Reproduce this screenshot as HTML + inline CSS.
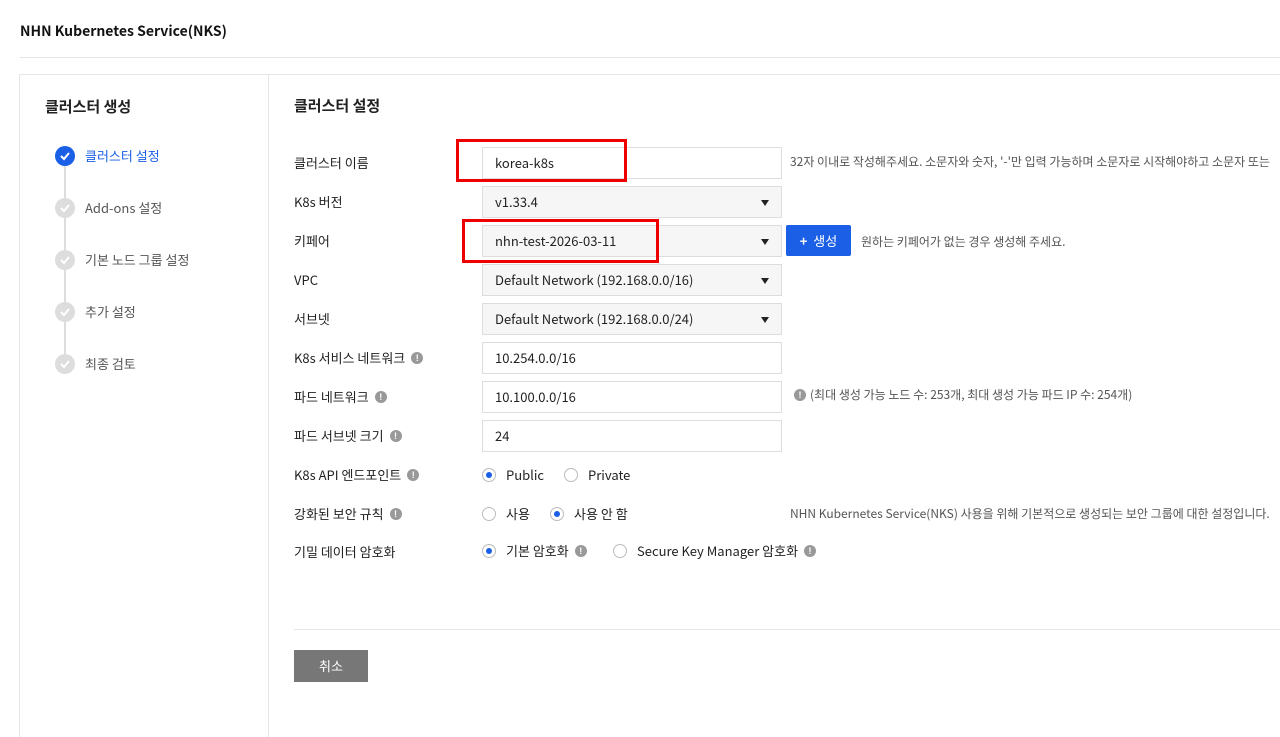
<!DOCTYPE html>
<html><head><meta charset="utf-8"><style>
*{box-sizing:border-box;margin:0;padding:0}
html,body{width:1280px;height:737px;overflow:hidden}
body{background:#fff;font-family:"Noto Sans CJK KR","Liberation Sans",sans-serif;color:#222;position:relative;font-size:13px}
.a{position:absolute;white-space:nowrap}
.lbl{position:absolute;left:294px;font-size:13px;color:#222;height:32px;line-height:32px;white-space:nowrap}
.inp{position:absolute;left:482px;width:300px;height:32px;border:1px solid #ddd;background:#fff;padding-left:12px;line-height:30px;font-size:13px}
.sel{background:#f6f6f6}
.sel:after{content:"";position:absolute;right:12px;top:13px;border-left:4px solid transparent;border-right:4px solid transparent;border-top:6px solid #222}
.i{display:inline-block;width:12px;height:12px;border-radius:50%;background:#999;color:#fff;font-size:9px;font-weight:bold;text-align:center;line-height:12px;vertical-align:middle;position:relative;top:-1px;margin-left:6px;font-family:"Liberation Sans",sans-serif}
.r{position:absolute;width:14px;height:14px;border-radius:50%;border:1px solid #bbb;background:#fff}
.r.on:after{content:"";position:absolute;left:3px;top:3px;width:6px;height:6px;border-radius:50%;background:#1a5fe6}
.step{position:absolute;left:85px;font-size:13px;color:#555;line-height:20px}
.dot{position:absolute;left:55px;width:20px;height:20px;border-radius:50%;background:#ddd}
.dot svg{position:absolute;left:4px;top:5px}
.help{position:absolute;font-size:12px;color:#555;white-space:nowrap;line-height:16px}
.red{position:absolute;border:3px solid #e00}
.t{position:absolute;line-height:20px}
</style></head><body>
<div class="a" style="left:20px;top:20px;font-size:14px;font-weight:bold;color:#111;line-height:22px">NHN Kubernetes Service(NKS)</div>
<div class="a" style="left:20px;top:57px;width:1260px;height:1px;background:#e5e5e5"></div>
<div class="a" style="left:19px;top:74px;width:1261px;height:663px;border:1px solid #e5e5e5;border-right:none;border-bottom:none"></div>
<div class="a" style="left:268px;top:74px;width:1px;height:663px;background:#e5e5e5"></div>
<div class="a" style="left:45px;top:96px;font-size:15px;font-weight:bold;line-height:22px">클러스터 생성</div>
<div class="a" style="left:64px;top:160px;width:2px;height:210px;background:#ddd"></div>
<div class="dot" style="top:146px;background:#1a5fe6"><svg width="12" height="10"><path d="M2 5l3 3 5-6" stroke="#fff" stroke-width="2" fill="none"/></svg></div>
<div class="step" style="top:146px;color:#1a5fe6">클러스터 설정</div>
<div class="dot" style="top:198px"><svg width="12" height="10"><path d="M2 5l3 3 5-6" stroke="#fff" stroke-width="2" fill="none"/></svg></div>
<div class="step" style="top:198px">Add-ons 설정</div>
<div class="dot" style="top:250px"><svg width="12" height="10"><path d="M2 5l3 3 5-6" stroke="#fff" stroke-width="2" fill="none"/></svg></div>
<div class="step" style="top:250px">기본 노드 그룹 설정</div>
<div class="dot" style="top:302px"><svg width="12" height="10"><path d="M2 5l3 3 5-6" stroke="#fff" stroke-width="2" fill="none"/></svg></div>
<div class="step" style="top:302px">추가 설정</div>
<div class="dot" style="top:354px"><svg width="12" height="10"><path d="M2 5l3 3 5-6" stroke="#fff" stroke-width="2" fill="none"/></svg></div>
<div class="step" style="top:354px">최종 검토</div>

<div class="a" style="left:294px;top:95px;font-size:15px;font-weight:bold;line-height:22px">클러스터 설정</div>

<div class="lbl" style="top:147px">클러스터 이름</div>
<div class="inp" style="top:147px">korea-k8s</div>
<div class="help" style="left:790px;top:154px">32자 이내로 작성해주세요. 소문자와 숫자, '-'만 입력 가능하며 소문자로 시작해야하고 소문자 또는</div>
<div class="lbl" style="top:186px">K8s 버전</div>
<div class="inp sel" style="top:186px">v1.33.4</div>
<div class="lbl" style="top:225px">키페어</div>
<div class="inp sel" style="top:225px">nhn-test-2026-03-11</div>
<div class="a" style="left:786px;top:225px;width:65px;height:31px;background:#1a5fe6;color:#fff;font-size:13px;line-height:31px;text-align:center;border-radius:2px"><b>+</b>&nbsp; 생성</div>
<div class="help" style="left:861px;top:234px">원하는 키페어가 없는 경우 생성해 주세요.</div>
<div class="lbl" style="top:264px">VPC</div>
<div class="inp sel" style="top:264px">Default Network (192.168.0.0/16)</div>
<div class="lbl" style="top:303px">서브넷</div>
<div class="inp sel" style="top:303px">Default Network (192.168.0.0/24)</div>
<div class="lbl" style="top:342px">K8s 서비스 네트워크<span class="i">!</span></div>
<div class="inp" style="top:342px">10.254.0.0/16</div>
<div class="lbl" style="top:381px">파드 네트워크<span class="i">!</span></div>
<div class="inp" style="top:381px">10.100.0.0/16</div>
<div class="help" style="left:788px;top:387px"><span class="i" style="margin:0 4px 0 6px">!</span>(최대 생성 가능 노드 수: 253개, 최대 생성 가능 파드 IP 수: 254개)</div>
<div class="lbl" style="top:420px">파드 서브넷 크기<span class="i">!</span></div>
<div class="inp" style="top:420px">24</div>
<div class="lbl" style="top:459px">K8s API 엔드포인트<span class="i">!</span></div>
<div class="r on" style="left:482px;top:468px"></div><div class="t" style="left:506px;top:465px">Public</div>
<div class="r" style="left:564px;top:468px"></div><div class="t" style="left:588px;top:465px">Private</div>
<div class="lbl" style="top:498px">강화된 보안 규칙<span class="i">!</span></div>
<div class="r" style="left:482px;top:507px"></div><div class="t" style="left:506px;top:504px">사용</div>
<div class="r on" style="left:550px;top:507px"></div><div class="t" style="left:574px;top:504px">사용 안 함</div>
<div class="help" style="left:790px;top:506px">NHN Kubernetes Service(NKS) 사용을 위해 기본적으로 생성되는 보안 그룹에 대한 설정입니다.</div>
<div class="lbl" style="top:536px">기밀 데이터 암호화</div>
<div class="r on" style="left:482px;top:544px"></div><div class="t" style="left:506px;top:541px">기본 암호화<span class="i">!</span></div>
<div class="r" style="left:613px;top:544px"></div><div class="t" style="left:637px;top:541px">Secure Key Manager 암호화<span class="i">!</span></div>

<div class="red" style="left:456px;top:139px;width:171px;height:43px"></div>
<div class="red" style="left:462px;top:219px;width:197px;height:44px"></div>

<div class="a" style="left:294px;top:629px;width:986px;height:1px;background:#e5e5e5"></div>
<div class="a" style="left:294px;top:650px;width:74px;height:32px;background:#777;color:#fff;text-align:center;line-height:32px;font-size:13px">취소</div>
</body></html>
